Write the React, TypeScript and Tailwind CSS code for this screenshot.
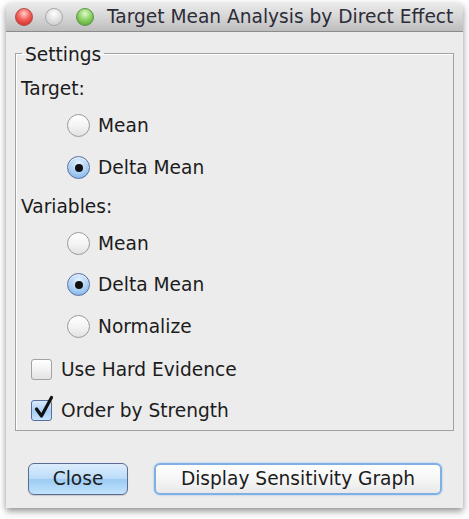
import React from "react";

const font = { fontFamily: '"DejaVu Sans", "Liberation Sans", sans-serif' };

function Radio({ checked, label }: { checked?: boolean; label: string }) {
  return (
    <div className="flex items-center">
      {checked ? (
        <span className="flex h-[23px] w-[23px] items-center justify-center rounded-full border border-[#5b6f9c] bg-[radial-gradient(circle_at_50%_30%,#e4f1fd_0%,#a9cff4_55%,#6fa7e4_100%)] shadow-[inset_0_1px_1px_rgba(255,255,255,0.8)]">
          <span className="h-[8px] w-[8px] rounded-full bg-[#111]" />
        </span>
      ) : (
        <span className="h-[23px] w-[23px] rounded-full border border-[#9a9a9a] bg-[linear-gradient(#ffffff,#f4f4f4_50%,#e2e2e2)]" />
      )}
      <span className="ml-[8px] text-[18.6px] text-[#1c1c1c]">{label}</span>
    </div>
  );
}

function Checkbox({ checked, label }: { checked?: boolean; label: string }) {
  return (
    <div className="flex items-center">
      <span
        className={
          checked
            ? "relative h-[21px] w-[21px] rounded-[3px] border border-[#5b6f9c] bg-[linear-gradient(#d9ebfc,#a8cff5_55%,#c6e3fd)]"
            : "relative h-[21px] w-[21px] rounded-[3px] border border-[#a2a2a2] bg-[linear-gradient(#ffffff,#f2f2f2_50%,#e4e4e4)]"
        }
      >
        {checked && (
          <svg className="absolute -top-[6px] left-[1px]" width="24" height="26" viewBox="0 0 24 26">
            <path
              d="M3.5 14 L8.5 21 L18.5 2.5"
              fill="none"
              stroke="#111"
              strokeWidth="3.2"
              strokeLinecap="round"
              strokeLinejoin="round"
            />
          </svg>
        )}
      </span>
      <span className="ml-[9px] text-[18.6px] text-[#1c1c1c]">{label}</span>
    </div>
  );
}

export default function App() {
  return (
    <div className="min-h-[519px] w-[469px] bg-white pt-[3px]" style={font}>
      <div className="ml-[6px] flex h-[505px] w-[457px] flex-col rounded-t-[5px] bg-[#ececec] shadow-[0_3px_7px_rgba(0,0,0,0.45)]">
        {/* title bar */}
        <div className="flex h-[29px] items-center rounded-t-[5px] border-b border-[#8c8c8c] bg-[linear-gradient(#ebebeb,#d6d6d6_50%,#bdbdbd)] px-[9px]">
          <span className="h-[18px] w-[18px] rounded-full border border-[#b24a46] bg-[radial-gradient(circle_at_50%_30%,#ffd0c8_0%,#f2605a_45%,#c7201d_100%)]" />
          <span className="ml-[12px] h-[18px] w-[18px] rounded-full border border-[#a8a8a8] bg-[radial-gradient(circle_at_50%_30%,#ffffff_0%,#e4e4e4_45%,#c4c4c4_100%)]" />
          <span className="ml-[13px] h-[18px] w-[18px] rounded-full border border-[#5b9545] bg-[radial-gradient(circle_at_50%_30%,#e2f8cc_0%,#8fd465_45%,#4a9a2c_100%)]" />
          <span className="ml-[13px] whitespace-nowrap text-[18.6px] text-[#2c2c38]">
            Target Mean Analysis by Direct Effect
          </span>
        </div>

        {/* settings group */}
        <fieldset className="mx-[9px] mt-[10px] h-[389px] border border-[#a2a2a2] shadow-[inset_1px_1px_0_#ffffff]">
          <legend className="ml-[6px] px-[3px] text-[18.6px] leading-[22px] text-[#1c1c1c]">
            <span className="relative top-[2px]">Settings</span>
          </legend>
          <div className="flex flex-col pl-[5px] pt-[9px]">
            <div className="flex h-[32px] items-center text-[18.6px] text-[#1c1c1c]">Target:</div>
            <div className="flex h-[42px] items-center pl-[46px]">
              <Radio label="Mean" />
            </div>
            <div className="flex h-[42px] items-center pl-[46px]">
              <Radio checked label="Delta Mean" />
            </div>
            <div className="flex h-[35px] items-center text-[18.6px] text-[#1c1c1c]">Variables:</div>
            <div className="flex h-[40px] items-center pl-[46px]">
              <Radio label="Mean" />
            </div>
            <div className="flex h-[42px] items-center pl-[46px]">
              <Radio checked label="Delta Mean" />
            </div>
            <div className="flex h-[42px] items-center pl-[46px]">
              <Radio label="Normalize" />
            </div>
            <div className="flex h-[43px] items-center pl-[10px]">
              <Checkbox label="Use Hard Evidence" />
            </div>
            <div className="flex h-[39px] items-center pl-[10px]">
              <Checkbox checked label="Order by Strength" />
            </div>
          </div>
        </fieldset>

        {/* buttons */}
        <div className="mt-[32px] flex gap-[26px] pl-[22px]">
          <button className="h-[32px] w-[100px] rounded-[6px] border border-[#5a6b94] bg-[linear-gradient(#dcedfc,#bcdcf8_48%,#9ccbf3_52%,#c3e3fe)] text-[18.6px] text-[#1c1c1c] shadow-[0_1px_1px_rgba(0,0,0,0.15)]">
            Close
          </button>
          <button className="h-[32px] w-[288px] rounded-[6px] border-2 border-[#7fb0e3] bg-[linear-gradient(#ffffff,#f6f6f6_50%,#e9e9e9)] text-[18.6px] text-[#1c1c1c] shadow-[0_0_2px_#8dbbea]">
            Display Sensitivity Graph
          </button>
        </div>
      </div>
    </div>
  );
}
